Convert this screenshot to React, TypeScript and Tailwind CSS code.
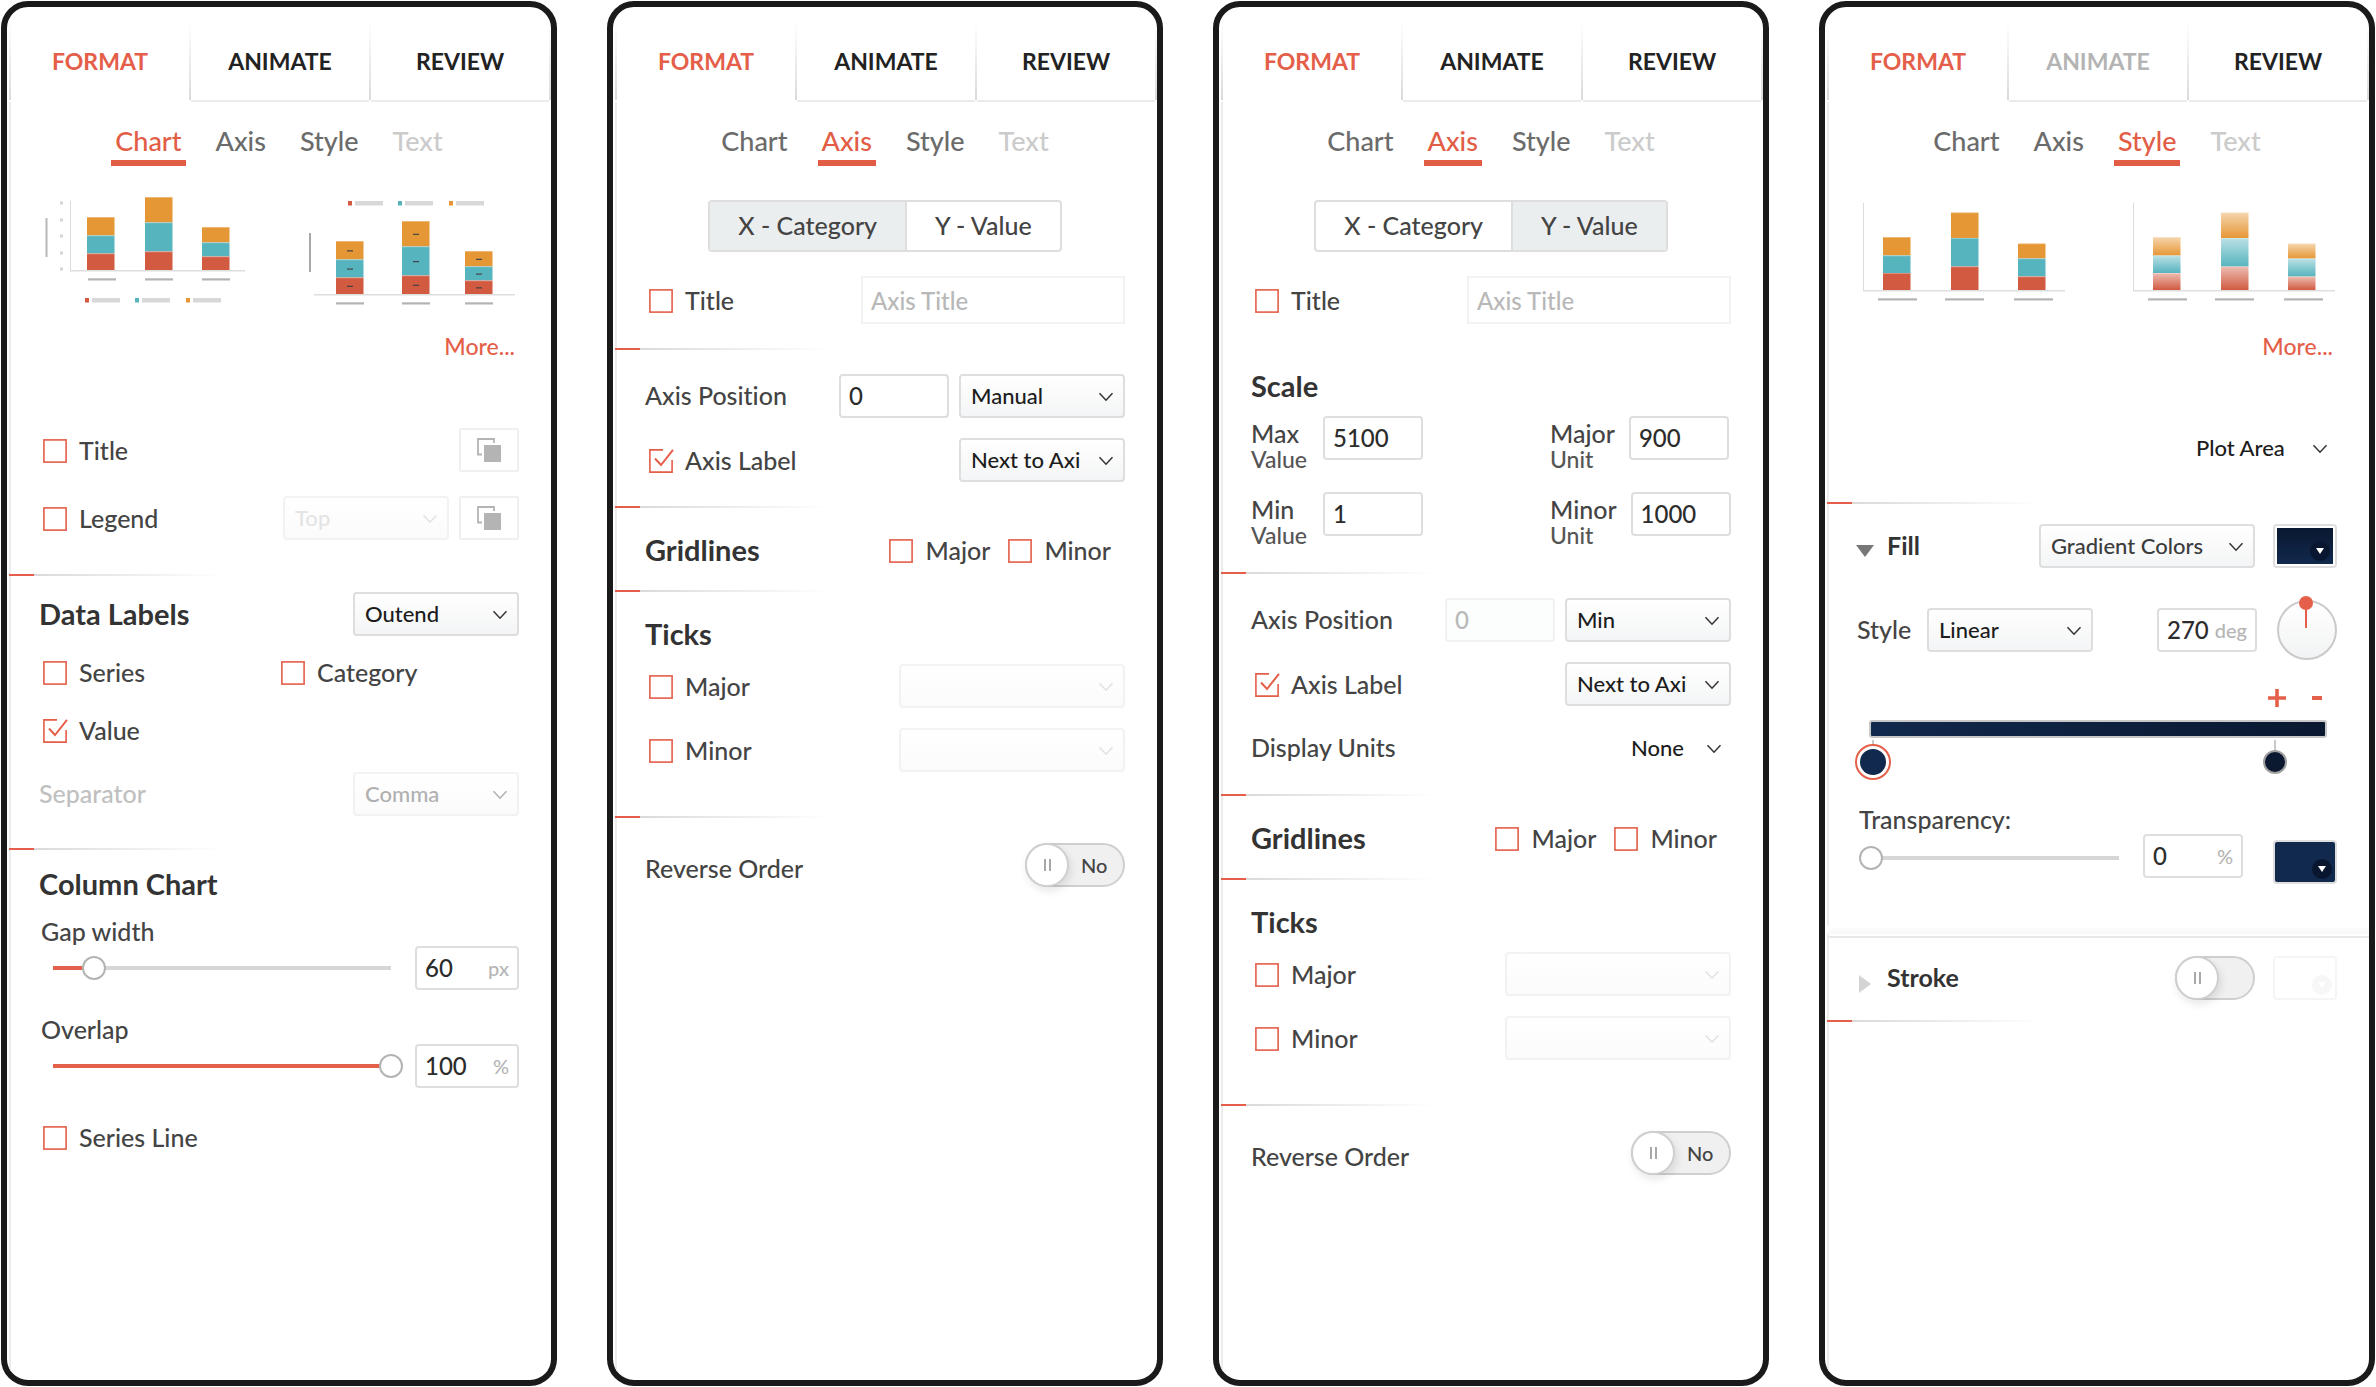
import { useId, useState } from "react";
import type { ReactNode } from "react";
import { clsx } from "clsx";

const ORANGE = "#e69735";
const TEAL = "#56b4be";
const RED = "#d15a40";

/* ---------- Small controls ---------- */

const Chevron = ({ className }: { className?: string }) => (
  <svg viewBox="0 0 16 10" className={clsx("h-[10px] w-4 fill-none stroke-current", className)} aria-hidden="true">
    <path d="M1.5 1.2 8 8.2l6.500-7" strokeWidth="1.5" />
  </svg>
);

const Checkbox = ({ label, defaultChecked = false }: { label: string; defaultChecked?: boolean }) => {
  const [checked, setChecked] = useState(defaultChecked);
  return (
    <label className="flex items-center gap-3 text-[25px] leading-7 text-[#444]">
      <span className="relative mt-px size-6">
        <input
          type="checkbox"
          checked={checked}
          onChange={(e) => setChecked(e.target.checked)}
          className="block size-6 appearance-none"
        />
        <svg viewBox="0 0 24 24" className="pointer-events-none absolute inset-0 size-6 overflow-visible fill-none stroke-[#e45e49]" strokeWidth="1.6" aria-hidden="true">
          {checked ? (
            <>
              <path d="M14 .9H.9v22.200h22.200V11" />
              <path d="m6 9.500 6 6.500L24 .9" strokeWidth="2" />
            </>
          ) : (
            <rect x=".9" y=".9" width="22.2" height="22.2" />
          )}
        </svg>
      </span>
      {label}
    </label>
  );
};

type SelectProps = {
  label: string;
  options: string[];
  width?: string;
  tone?: "normal" | "muted" | "faint" | "soft";
  plain?: boolean;
};

const Select = ({ label, options, width = "w-[166px]", tone = "normal", plain = false }: SelectProps) => {
  const disabled = tone === "muted" || tone === "faint";
  return (
    <div className={clsx("relative shrink-0", width)}>
      <select
        aria-label={label}
        disabled={disabled}
        className={clsx(
          "block h-11 w-full appearance-none overflow-hidden text-[22px] leading-7 opacity-100",
          plain ? "bg-transparent pl-0 pr-10" : "rounded-[4px] border-2 bg-linear-to-b pl-[10px] pr-[42px]",
          !plain && (disabled ? "border-[#f2f2f2] from-white to-[#fbfbfb]" : "border-[#dedede] from-white to-[#f4f5f6]"),
          tone === "normal" && "text-[#1c1c1c]",
          tone === "soft" && "text-[#3c3c3c]",
          tone === "muted" && "text-[#b0b0b0]",
          tone === "faint" && "text-[#e4e4e4]"
        )}
      >
        {options.map((o) => (
          <option key={o}>{o}</option>
        ))}
      </select>
      <Chevron
        className={clsx(
          "pointer-events-none absolute top-[18px]",
          plain ? "right-[9px]" : "right-[11px]",
          tone === "faint" ? "text-[#e2e2e2]" : tone === "muted" ? "text-[#b0b0b0]" : "text-[#333]"
        )}
      />
    </div>
  );
};

type FieldProps = { label: string; value: string; unit?: string; width?: string; disabled?: boolean; id?: string };

const Field = ({ label, value, unit, width = "w-[100px]", disabled = false, id }: FieldProps) => (
  <div
    className={clsx(
      "flex h-11 shrink-0 items-center rounded-[4px] border-2 px-2",
      width,
      disabled ? "border-[#f2f2f2] bg-[#fcfdfd] text-[#b8b8b8]" : "border-[#dedede] bg-white text-[#2c2c2c]"
    )}
  >
    <input
      id={id}
      type="text"
      aria-label={id ? undefined : label}
      defaultValue={value}
      disabled={disabled}
      className="min-w-0 flex-1 bg-transparent text-2xl leading-7 outline-none"
    />
    {unit && <span className="text-xl text-[#b5b5b5]">{unit}</span>}
  </div>
);

const Slider = ({ id, max, initial }: { id: string; max: number; initial: number }) => {
  const [value, setValue] = useState(initial);
  const percent = (value / max) * 100;
  return (
    <input
      id={id}
      type="range"
      min={0}
      max={max}
      value={value}
      onChange={(e) => setValue(Number(e.target.value))}
      className="h-6 min-w-0 flex-1 appearance-none bg-[length:calc(100%-24px)_4px] bg-center bg-no-repeat [&::-webkit-slider-thumb]:size-6 [&::-webkit-slider-thumb]:appearance-none [&::-webkit-slider-thumb]:rounded-full [&::-webkit-slider-thumb]:border-2 [&::-webkit-slider-thumb]:border-[#b4b4b4] [&::-webkit-slider-thumb]:bg-white"
      style={{ backgroundImage: `linear-gradient(to right, #e5604b ${percent}%, #d6d6d6 ${percent}%)` }}
    />
  );
};

const Toggle = ({ label, text }: { label: string; text?: string }) => (
  <button
    type="button"
    role="switch"
    aria-checked="false"
    aria-label={label}
    className={clsx(
      "flex h-11 shrink-0 items-center rounded-full border-2 border-[#cfcfcf] bg-[#f0f0f0] text-[20px] text-[#444]",
      text ? "w-[100px]" : "w-20"
    )}
  >
    <span className="-ml-[2px] flex size-11 items-center justify-center gap-[3px] rounded-full border-2 border-[#cfcfcf] bg-white shadow-[2px_4px_8px_rgba(0,0,0,0.10)]">
      <span className="h-3 w-[2px] bg-[#a8a8a8]" />
      <span className="h-3 w-[2px] bg-[#a8a8a8]" />
    </span>
    {text && <span className="ml-3">{text}</span>}
  </button>
);

const ArrangeButton = ({ label }: { label: string }) => (
  <button type="button" aria-label={label} className="flex h-11 w-[60px] items-center justify-center rounded-[2px] border-2 border-[#f0f0f0] bg-white">
    <svg viewBox="0 0 24 24" className="size-6" aria-hidden="true">
      <path d="M5 16.500H1V1h16v4" fill="none" stroke="#b4b4b4" strokeWidth="1.8" />
      <rect x="7" y="7" width="17" height="17" fill="#b4b4b4" />
    </svg>
  </button>
);

const Swatch = ({ label, fill, faint = false }: { label: string; fill: string; faint?: boolean }) => (
  <button
    type="button"
    aria-label={label}
    className={clsx("flex h-11 w-16 shrink-0 rounded-[4px] border-2 bg-white", faint ? "border-[#f5f5f5]" : "border-[#dedede]")}
  >
    <span className={clsx("flex size-full items-end justify-end rounded-[2px] p-[3px]", fill)}>
      <span className={clsx("flex size-5 items-center justify-center rounded-full", faint ? "bg-[#f7f7f7]" : "bg-[#091630]")}>
        <svg viewBox="0 0 8 6" className="h-[6px] w-2 fill-white" aria-hidden="true">
          <path d="M0 0h8L4 6z" />
        </svg>
      </span>
    </span>
  </button>
);

/* ---------- Chart thumbnails ---------- */

// top of orange, teal and red, counted down from the viewBox top
type Bar = { x: number; tops: [number, number, number] };

type ThumbProps = {
  name: string;
  bars: Bar[];
  base: number;
  baseX: [number, number];
  axisTop?: number;
  labelX: number[];
  labelWidth: number;
  gradient?: boolean;
  dashes?: boolean;
  children?: ReactNode;
};

const Thumb = ({ name, bars, base, baseX, axisTop, labelX, labelWidth, gradient, dashes, children }: ThumbProps) => {
  const uid = useId().replace(/\W/g, "");
  const colors = [ORANGE, TEAL, RED];
  return (
    <button type="button" aria-label={name} className="block">
      <svg viewBox="0 0 210 120" className="h-[120px] w-[210px]" aria-hidden="true">
        <defs>
          {colors.map((c, i) => (
            <linearGradient key={c} id={`${uid}g${i}`} x1="0" y1="0" x2="0" y2="1">
              <stop offset="0" stopColor={c} stopOpacity=".4" />
              <stop offset="1" stopColor={c} />
            </linearGradient>
          ))}
        </defs>
        {axisTop !== undefined && <rect x={baseX[0]} y={axisTop} width="1" height={base - axisTop} fill="#dcdcdc" />}
        <rect x={baseX[0]} y={base} width={baseX[1] - baseX[0]} height="1.500" fill="#dedede" />
        {bars.map((bar) =>
          bar.tops.map((top, i) => {
            const bottom = i < 2 ? bar.tops[i + 1] : base;
            return (
              <g key={`${bar.x}-${i}`}>
                <rect x={bar.x} y={top} width="27.500" height={bottom - top} fill={gradient ? `url(#${uid}g${i})` : colors[i]} />
                <rect x={bar.x} y={top} width="27.500" height=".7" fill="#fff" opacity=".45" />
                {dashes && <rect x={bar.x + 11} y={(top + bottom) / 2} width="6" height="1.200" fill="#444" />}
              </g>
            );
          })
        )}
        {labelX.map((x) => (
          <rect key={x} x={x} y={base + 8.300} width={labelWidth} height="2.200" fill="#b4b4b4" />
        ))}
        {children}
      </svg>
    </button>
  );
};

const MiniLegend = ({ y, xs }: { y: number; xs: number[] }) => (
  <>
    {[RED, TEAL, ORANGE].map((c, i) => (
      <g key={c}>
        <rect x={xs[i]} y={y} width="4" height="4.500" fill={c} />
        <rect x={xs[i] + 7} y={y} width="28" height="4.500" fill="#d8d8d8" />
      </g>
    ))}
  </>
);

const STYLE_BARS: Bar[] = [
  { x: 26, tops: [47, 65.5, 83] },
  { x: 94, tops: [22.5, 48, 76.5] },
  { x: 161, tops: [53.5, 68.5, 86.5] },
];

const MoreLink = () => (
  <div className="mt-5 flex justify-end pr-1">
    <a href="#more" className="text-[23px] leading-8 text-[#e45e49]">
      More...
    </a>
  </div>
);

/* ---------- Panel frame ---------- */

const TABS = ["FORMAT", "ANIMATE", "REVIEW"];
const SUB_TABS = ["Chart", "Axis", "Style", "Text"];

const TabLine = () => <span className="mb-[2px] w-[2px] bg-linear-to-b from-transparent to-[#dadada]" />;

const Panel = ({ active, dimmedTab, children }: { active: string; dimmedTab?: string; children: ReactNode }) => (
  <section className="flex flex-col overflow-hidden rounded-[27px] border-[6px] border-[#1a1a1a] bg-white pl-[2px]">
    <div role="tablist" className="mt-[15px] flex h-20">
      <TabLine />
      {TABS.map((tab, i) => (
        <div key={tab} className="flex flex-1">
          <button
            type="button"
            role="tab"
            aria-selected={i === 0}
            disabled={tab === dimmedTab}
            className={clsx(
              "flex-1 border-b-2 text-[23px] font-bold",
              i === 0 ? "border-transparent text-[#e45e49]" : "border-[#ebebeb]",
              i > 0 && (tab === dimmedTab ? "text-[#b4b4b4]" : "text-[#222]")
            )}
          >
            {tab}
          </button>
          <TabLine />
        </div>
      ))}
    </div>
    <div className="flex-1 border-l-2 border-[#ebecec] pl-7 pr-8">
      <nav className="flex justify-center gap-[26px]">
        {SUB_TABS.map((tab) => (
          <button
            key={tab}
            type="button"
            disabled={tab === "Text"}
            className={clsx(
              "h-16 border-b-[6px] px-1 pt-[19px] text-[27px] leading-8",
              tab === active ? "border-[#e25d46] text-[#e25d46]" : "border-transparent",
              tab !== active && (tab === "Text" ? "text-[#cbcbcb]" : "text-[#6b6b6b]")
            )}
          >
            {tab}
          </button>
        ))}
      </nav>
      {children}
    </div>
  </section>
);

const Divider = ({ className }: { className: string }) => (
  <div className={clsx("-ml-[30px] flex h-[2px]", className)}>
    <span className="w-[25px] bg-[#e45e49]" />
    <span className="w-[190px] bg-linear-to-r from-[#dadada] to-transparent" />
  </div>
);

const Heading = ({ children, className }: { children: ReactNode; className?: string }) => (
  <h2 className={clsx("pb-px text-[29px] font-bold leading-[31px] text-[#333]", className)}>{children}</h2>
);

const Row = ({ children, className }: { children: ReactNode; className?: string }) => (
  <div className={clsx("flex items-center justify-between", className)}>{children}</div>
);

/* ---------- Panels ---------- */

const SliderRow = ({ label, value, max, unit, className }: { label: string; value: number; max: number; unit: string; className: string }) => {
  const id = useId();
  return (
    <div className={className}>
      <label htmlFor={id} className="block pb-px pl-[2px] text-[25px] leading-7 text-[#444]">
        {label}
      </label>
      <div className="flex items-center gap-3 pl-[2px]">
        <Slider id={id} max={max} initial={value} />
        <Field label={`${label} value`} value={String(value)} unit={unit} width="w-[104px]" />
      </div>
    </div>
  );
};

const ChartPanel = () => (
  <Panel active="Chart">
    <div className="mt-6 flex justify-between">
      <Thumb
        name="Stacked column with legend below"
        bars={[
          { x: 48, tops: [27, 45.5, 63.5] },
          { x: 106, tops: [7, 32.5, 61.5] },
          { x: 163, tops: [37, 52.5, 66.5] },
        ]}
        base={80}
        baseX={[31, 206]}
        axisTop={11}
        labelX={[49, 106, 163]}
        labelWidth={28}
      >
        <rect x="6.500" y="28" width="2" height="39" fill="#b8b8b8" />
        {[13, 30, 46, 63, 79].map((y) => (
          <rect key={y} x="21" y={y - 1.5} width="3" height="3" fill="#d4d4d4" />
        ))}
        <MiniLegend y={108} xs={[46, 96, 147]} />
      </Thumb>
      <Thumb
        name="Stacked column with legend above"
        bars={[
          { x: 27, tops: [51, 69.5, 87.5] },
          { x: 93, tops: [31, 56.5, 85.5] },
          { x: 156, tops: [61, 76.5, 90.5] },
        ]}
        base={104}
        baseX={[5, 206]}
        labelX={[27, 93, 156]}
        labelWidth={28}
        dashes
      >
        <rect x="0" y="43" width="2" height="39" fill="#a8a8a8" />
        <MiniLegend y={11} xs={[39, 89, 140]} />
      </Thumb>
    </div>
    <MoreLink />

    <Row className="mt-[66px] pl-1">
      <Checkbox label="Title" />
      <ArrangeButton label="Arrange title" />
    </Row>
    <Row className="mt-6 pl-1">
      <Checkbox label="Legend" />
      <div className="flex gap-[10px]">
        <Select label="Legend position" options={["Top", "Bottom"]} tone="faint" />
        <ArrangeButton label="Arrange legend" />
      </div>
    </Row>
    <Divider className="mt-[34px]" />

    <Row className="mt-4">
      <Heading>Data Labels</Heading>
      <Select label="Data label position" options={["Outend", "Inend", "Center"]} />
    </Row>
    <div className="mt-[22px] grid grid-cols-2 pl-1">
      <Checkbox label="Series" />
      <Checkbox label="Category" />
    </div>
    <div className="mt-[30px] flex pl-1">
      <Checkbox label="Value" defaultChecked />
    </div>
    <Row className="mt-7">
      <span className="text-[25px] text-[#c0c0c0]">Separator</span>
      <Select label="Separator" options={["Comma", "Space"]} tone="muted" />
    </Row>
    <Divider className="mt-8" />

    <Heading className="mt-[18px]">Column Chart</Heading>
    <SliderRow className="mt-[17px]" label="Gap width" value={60} max={500} unit="px" />
    <SliderRow className="mt-[25px]" label="Overlap" value={100} max={100} unit="%" />
    <div className="mt-[35px] flex pl-1">
      <Checkbox label="Series Line" />
    </div>
  </Panel>
);

const AxisPicker = ({ selected }: { selected: "x" | "y" }) => (
  <div className="mt-[34px] flex justify-center">
    <div className="flex h-[52px] overflow-hidden rounded-[4px] border-2 border-[#dedede] text-[25px] text-[#444]">
      <button type="button" aria-pressed={selected === "x"} className={clsx("border-r-2 border-[#dedede] px-7", selected === "x" && "bg-[#ebeeef]")}>
        X - Category
      </button>
      <button type="button" aria-pressed={selected === "y"} className={clsx("px-7", selected === "y" && "bg-[#ebeeef]")}>
        Y - Value
      </button>
    </div>
  </div>
);

const AxisTitle = () => (
  <Row className="mt-6 pl-1">
    <Checkbox label="Title" />
    <input
      type="text"
      aria-label="Axis title"
      placeholder="Axis Title"
      className="h-12 w-[264px] border-2 border-[#f2f2f2] bg-white px-2 text-2xl text-[#444] placeholder:text-[#b8b8b8]"
    />
  </Row>
);

const AxisPosition = ({ option, disabled }: { option: string; disabled?: boolean }) => (
  <>
    <Row className="mt-6">
      <span className="text-[25px] text-[#444]">Axis Position</span>
      <div className="flex gap-[10px]">
        <Field label="Axis position" value="0" width="w-[110px]" disabled={disabled} />
        <Select label="Axis position mode" options={[option, "Max"]} />
      </div>
    </Row>
    <Row className="mt-5 pl-1">
      <Checkbox label="Axis Label" defaultChecked />
      <Select label="Axis label placement" options={["Next to Axis", "High", "Low"]} />
    </Row>
  </>
);

const GridAndTicks = () => (
  <>
    <Divider className="mt-6" />
    <Row className="mt-[26px]">
      <Heading>Gridlines</Heading>
      <div className="flex gap-[18px] pr-[14px]">
        <Checkbox label="Major" />
        <Checkbox label="Minor" />
      </div>
    </Row>
    <Divider className="mt-6" />
    <Heading className="mt-[26px]">Ticks</Heading>
    <Row className="mt-[14px] pl-1">
      <Checkbox label="Major" />
      <Select label="Major tick type" options={[""]} width="w-[226px]" tone="faint" />
    </Row>
    <Row className="mt-5 pl-1">
      <Checkbox label="Minor" />
      <Select label="Minor tick type" options={[""]} width="w-[226px]" tone="faint" />
    </Row>
    <Divider className="mt-11" />
    <Row className="mt-6">
      <span className="pt-2 text-[25px] text-[#444]">Reverse Order</span>
      <Toggle label="Reverse order" text="No" />
    </Row>
  </>
);

const CategoryAxisPanel = () => (
  <Panel active="Axis">
    <AxisPicker selected="x" />
    <AxisTitle />
    <Divider className="mt-6" />
    <AxisPosition option="Manual" />
    <GridAndTicks />
  </Panel>
);

const ScaleField = ({ top, bottom, value, width }: { top: string; bottom: string; value: string; width?: string }) => {
  const id = useId();
  return (
    <div className="flex gap-[14px]">
      <label htmlFor={id} className={clsx("pt-1 text-[25px] leading-[26px] text-[#444]", width)}>
        {top}
        <span className="block text-[23px] leading-[27px] text-[#555]">{bottom}</span>
      </label>
      <Field id={id} label={`${top} ${bottom}`} value={value} />
    </div>
  );
};

const ValueAxisPanel = () => (
  <Panel active="Axis">
    <AxisPicker selected="y" />
    <AxisTitle />
    <Heading className="mt-[46px]">Scale</Heading>
    <div className="mt-[14px] grid grid-cols-[299px_1fr] gap-y-[19px]">
      <ScaleField top="Max" bottom="Value" value="5100" width="w-[58px]" />
      <ScaleField top="Major" bottom="Unit" value="900" />
      <ScaleField top="Min" bottom="Value" value="1" width="w-[58px]" />
      <ScaleField top="Minor" bottom="Unit" value="1000" />
    </div>
    <Divider className="mt-[23px]" />
    <AxisPosition option="Min" disabled />
    <Row className="mt-5">
      <span className="text-[25px] text-[#444]">Display Units</span>
      <Select label="Display units" options={["None"]} width="w-[100px]" plain />
    </Row>
    <GridAndTicks />
  </Panel>
);

const GradientStops = () => (
  <div className="mt-[2px] ml-3 mr-[10px]">
    {/* handles sit under the bar at their offset along the gradient */}
    <div className="relative h-10">
      <button type="button" aria-label="Gradient stop 1" className="absolute -left-[14px] flex w-9 flex-col items-center">
        <span className="h-1 w-[2px] bg-[#c8c8c8]" />
        <span className="flex size-9 items-center justify-center rounded-full border-2 border-[#e5604b] bg-white">
          <span className="size-[26px] rounded-full bg-[#11294d]" />
        </span>
      </button>
      <button type="button" aria-label="Gradient stop 2" className="absolute right-10 flex w-6 flex-col items-center">
        <span className="h-[10px] w-[2px] bg-[#c8c8c8]" />
        <span className="size-6 rounded-full border-2 border-[#a0a0a0] bg-[#0a1830]" />
      </button>
    </div>
  </div>
);

const StylePanel = () => {
  const transparencyId = useId();
  return (
    <Panel active="Style" dimmedTab="ANIMATE">
      <div className="mt-6 flex justify-between">
        <Thumb name="Solid columns" bars={STYLE_BARS} base={100} baseX={[6, 208]} axisTop={13} labelX={[21, 88, 157]} labelWidth={39} />
        <Thumb name="Gradient columns" bars={STYLE_BARS} base={100} baseX={[6, 208]} axisTop={13} labelX={[21, 88, 157]} labelWidth={39} gradient />
      </div>
      <MoreLink />

      <div className="mt-16 flex justify-end">
        <Select label="Chart element" options={["Plot Area", "Series"]} width="w-[141px]" plain />
      </div>
      <Divider className="mt-8" />

      <div className="mt-5 flex items-center">
        <button type="button" aria-label="Collapse fill" className="mt-[10px] w-[30px]">
          <svg viewBox="0 0 18 12" className="-ml-px h-3 w-[18px] fill-[#777]" aria-hidden="true">
            <path d="M0 0h18L9 12z" />
          </svg>
        </button>
        <h2 className="text-[25px] font-bold text-[#333]">Fill</h2>
        <div className="ml-auto flex gap-[18px]">
          <Select label="Fill type" options={["Gradient Colors", "Solid"]} width="w-[216px]" tone="soft" />
          <Swatch label="Fill colour" fill="border-2 border-white bg-linear-to-b from-[#0a1830] to-[#11294d]" />
        </div>
      </div>

      <div className="mt-8 flex items-center">
        <span className="w-[70px] text-[25px] text-[#444]">Style</span>
        <Select label="Gradient style" options={["Linear", "Radial"]} />
        <div className="ml-auto flex items-center gap-5">
          <Field label="Angle" value="270" unit="deg" />
          <button type="button" aria-label="Angle dial" className="size-[60px]">
            <svg viewBox="0 0 60 60" className="size-[60px] overflow-visible" aria-hidden="true">
              <defs>
                <linearGradient id="dial" x1="0" y1="0" x2="0" y2="1">
                  <stop offset="0" stopColor="#fff" />
                  <stop offset="1" stopColor="#f2f3f4" />
                </linearGradient>
              </defs>
              <circle cx="30" cy="30" r="29" fill="url(#dial)" stroke="#cacaca" strokeWidth="2" />
              <path d="M29 3v25" stroke="#e5604b" strokeWidth="2" />
              <circle cx="29" cy="3" r="7" fill="#e5604b" />
            </svg>
          </button>
        </div>
      </div>

      <div className="mt-6 flex h-7 items-center justify-end gap-5 pr-[10px] text-[#e5604b]">
        <button type="button" aria-label="Add stop" className="flex size-5 items-center justify-center">
          <svg viewBox="0 0 18 18" className="size-[18px] fill-current" aria-hidden="true">
            <path d="M7.200 0h3.600v7.200H18v3.600h-7.200V18H7.200v-7.200H0V7.200h7.200z" />
          </svg>
        </button>
        <button type="button" aria-label="Remove stop" className="flex size-5 items-center justify-center">
          <span className="h-1 w-[10px] bg-current" />
        </button>
      </div>
      <div className="mt-2 ml-3 mr-[10px] h-[18px] rounded-[3px] border-2 border-[#c8c8c8] bg-linear-to-r from-[#11294d] to-[#0a1830]" />
      <GradientStops />

      <label htmlFor={transparencyId} className="mt-[25px] block pb-px pl-[2px] text-[25px] leading-7 text-[#444]">
        Transparency:
      </label>
      <div className="flex items-start pl-[2px]">
        <div className="mt-3 flex w-[272px]">
          <Slider id={transparencyId} max={100} initial={0} />
        </div>
        <div className="ml-auto flex gap-[30px]">
          <Field label="Transparency value" value="0" unit="%" />
          <div className="mt-[6px]">
            <Swatch label="Stop colour" fill="bg-[#11294d]" />
          </div>
        </div>
      </div>

      <div className="-ml-[30px] -mr-[32px] mt-[42px] h-3 border-b-2 border-[#e8e8e8]">
        <div className="h-2 bg-linear-to-b from-white to-[#f7f7f7]" />
      </div>

      <div className="mt-[18px] flex items-center">
        <button type="button" aria-label="Expand stroke" className="mt-3 w-[30px] pl-[2px]">
          <svg viewBox="0 0 12 18" className="h-[18px] w-3 fill-[#d4d4d4]" aria-hidden="true">
            <path d="M0 0v18l12-9z" />
          </svg>
        </button>
        <h2 className="text-[25px] font-bold text-[#333]">Stroke</h2>
        <div className="ml-auto flex gap-[18px]">
          <Toggle label="Stroke" />
          <Swatch label="Stroke colour" fill="bg-white" faint />
        </div>
      </div>
      <Divider className="mt-5" />
    </Panel>
  );
};

export default function App() {
  return (
    <main className="grid min-h-screen grid-cols-4 gap-x-[50px] bg-white px-px pt-px pb-px font-[Lato,sans-serif] font-medium [font-variant-ligatures:none]">
      <ChartPanel />
      <CategoryAxisPanel />
      <ValueAxisPanel />
      <StylePanel />
    </main>
  );
}
